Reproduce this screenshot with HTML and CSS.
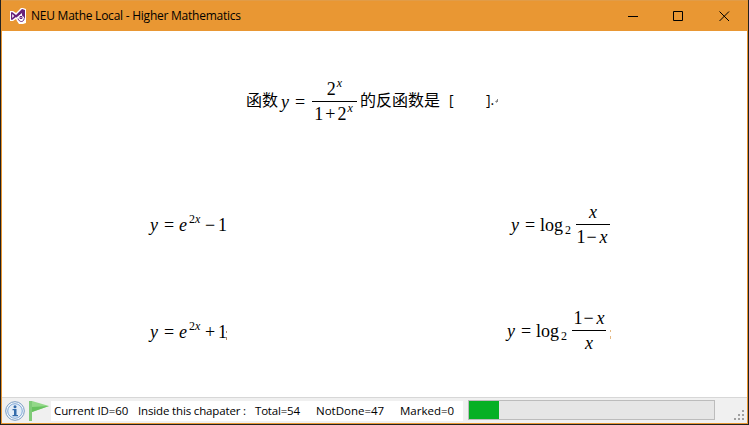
FILE: index.html
```html
<!DOCTYPE html>
<html lang="en">
<head>
<meta charset="utf-8">
<title>NEU Mathe Local - Higher Mathematics</title>
<link rel="stylesheet" href="styles.css">
</head>
<body>
<div class="window">
  <header class="titlebar">
    <svg class="app-icon" width="16" height="16" viewBox="0 0 16 16">
      <path fill="#fff" d="M0 3h3l3 2 5-5h2l3 1v14l-3 1H9l-2-3-1-2-3 2H0z"/>
      <path fill="#68217a" d="M1 4.500 2 4l4 3 6-6 3 1v9l-3 3-6-5-4 3-1-.5zM2.200 6v4l2-2zM12 5 8.500 8l3.500 3z"/>
      <path fill="#fff" d="m7 9 3-2 3 1 2 3-1 4H9l-2-3z"/>
      <path fill="none" stroke="#68217a" d="M8 10.500c1 4 6 4 6 0M10 8.500h2v2h-2z"/>
    </svg>
    <span class="title">NEU Mathe Local - Higher Mathematics</span>
    <div class="controls">
      <svg width="46" height="30" viewBox="0 0 46 30"><path d="M18 15.500h10"/></svg>
      <svg width="46" height="30" viewBox="0 0 46 30"><path d="M17.500 10.500h9v9h-9z"/></svg>
      <svg width="46" height="30" viewBox="0 0 46 30"><path d="m17.500 10.500 9.500 9.500m0-9.500-9.500 9.500"/></svg>
    </div>
  </header>

  <main class="content">
    <section class="question">
      <span class="cjk lead">函数</span>
      <span class="math">
        <i class="y">y</i><span class="eq">=</span>
        <span class="frac wide">
          <span class="num">2<i class="sup">x</i></span>
          <span class="den"><span>1</span><span class="plus">+</span><span>2</span><i class="sup">x</i></span>
        </span>
      </span>
      <span class="cjk tail">的反函数是</span>
      <span class="bracket open">[</span>
      <span class="bracket close">].</span>
      <svg class="mark" width="3" height="5" viewBox="0 0 3 5"><path fill="#888" d="M0 2.500 2 1v3zM2 0h1v3H2z"/></svg>
    </section>
    <section class="answers">
      <div class="answer"><span class="math">
        <i class="y">y</i><span class="eq">=</span><i class="e">e</i><span class="power">2<i>x</i></span><span class="op">−</span><span>1</span>
      </span></div>
      <div class="answer"><span class="math">
        <i class="y">y</i><span class="eq">=</span><span class="log">log</span><span class="sub">2</span>
        <span class="frac">
          <span class="num"><i>x</i></span>
          <span class="den"><span>1</span><span class="minus">−</span><i>x</i></span>
        </span>
      </span></div>
      <div class="answer"><span class="math">
        <i class="y">y</i><span class="eq">=</span><i class="e">e</i><span class="power">2<i>x</i></span><span class="op">+</span><span>1</span>
        <svg class="dots near" width="1" height="9" viewBox="0 0 1 9"><path fill="#b0886a" d="M0 0h1v2H0zM0 6h1v3H0z"/></svg>
      </span></div>
      <div class="answer"><span class="math">
        <i class="y">y</i><span class="eq">=</span><span class="log">log</span><span class="sub">2</span>
        <span class="frac">
          <span class="num"><span>1</span><span class="minus">−</span><i>x</i></span>
          <span class="den single"><i>x</i></span>
        </span>
        <svg class="dots far" width="1" height="9" viewBox="0 0 1 9"><path fill="#e5b983" d="M0 0h1v2H0zM0 6h1v3H0z"/></svg>
      </span></div>
    </section>
  </main>

  <footer class="statusbar">
    <svg class="info" width="20" height="20" viewBox="0 0 20 20">
      <circle cx="10" cy="10" r="9.300" fill="#f5f8fb" stroke="#779bc2" stroke-width="1"/>
      <circle cx="10" cy="10" r="7.300" fill="#e3edf7" stroke="#7fa8d8" stroke-width="1"/>
      <circle cx="10" cy="5.700" r="1.500" fill="#356cab"/>
      <path fill="#356cab" d="M7.500 8h4v6H13v1.300H7.500V14H9V9.300H7.500z"/>
    </svg>
    <svg class="flag" width="22" height="20" viewBox="0 0 22 20">
      <path fill="#7fcb78" d="M1 0h3v20H1z"/>
      <path fill="#92d888" d="m4 0 17 5L4 11z"/>
      <path fill="#67c25f" d="m4 6 17-1L4 11z"/>
    </svg>
    <div class="labels">
      <span class="id">Current ID=60</span>
      <span class="chapter">Inside this chapater :</span>
      <span class="total">Total=54</span>
      <span class="notdone">NotDone=47</span>
      <span class="marked">Marked=0</span>
    </div>
    <div class="progress"><div class="bar"></div></div>
    <svg class="grip" width="12" height="12" viewBox="0 0 12 12">
      <path fill="#a0a0a0" d="M8 1h2v2H8zM4 5h2v2H4zM8 5h2v2H8zM0 9h2v2H0zM4 9h2v2H4zM8 9h2v2H8z"/>
    </svg>
  </footer>
</div>
</body>
</html>
```

FILE: styles.css
```css
* { box-sizing: border-box; }
body { margin: 0; background: #23211f; overflow: hidden; }
i { font-style: italic; }

.window {
  display: flex;
  flex-direction: column;
  width: 747px;
  height: 424px;
  margin-left: 1px;
  border: 1px solid #e89632;
  border-top: 0;
  background: #fff;
  font: 12px/16px "Open Sans", "Noto Sans", sans-serif;
  color: #000;
}

.titlebar {
  display: flex;
  align-items: center;
  flex: none;
  height: 31px;
  padding-left: 8px;
  border-top: 1px solid #e19c48;
  background: #e99733;
}
.app-icon { margin-top: -1px; }
.title { margin-left: 5px; letter-spacing: -0.24px; white-space: nowrap; }
.controls { display: flex; margin-left: auto; margin-right: -1px; }
.controls svg { fill: none; stroke: #000; stroke-width: 1; margin-top: -1px; }

.content { flex: 1; display: flex; flex-direction: column; min-height: 0; }
.question {
  display: flex;
  align-items: center;
  height: 141px;
  padding-left: 244px;
}
.cjk { font: 16px/20px "Noto Sans CJK SC", sans-serif; font-weight: 400; margin-bottom: 6px; white-space: nowrap; }
.lead { width: 35px; }
.tail { margin-left: 3px; width: 89px; }
.bracket { font-size: 14px; line-height: 20px; margin-bottom: 4px; }
.open { width: 37px; }
.close { width: 9px; }

.answers { display: grid; grid-template-columns: 373px 372px; grid-template-rows: 106px 108px; }
.answer { display: flex; align-items: center; padding-left: 148px; }
.answer:nth-child(2) { padding-left: 136px; }
.answer:nth-child(4) { padding: 0 0 2px 132px; }

.math { display: flex; align-items: center; font: 18px/20px "Liberation Serif", serif; }
.y { width: 14px; }
.eq { width: 15px; }
.e { width: 10px; }
.power { width: 16px; font-size: 12px; margin-bottom: 12px; }
.op { width: 13px; }
.log { width: 24px; }
.sub { width: 12px; padding-left: 1px; font-size: 12px; margin-top: 9px; }
.frac { display: flex; flex-direction: column; width: 34px; }
.frac.wide { width: 45px; margin-left: 2px; }
.num, .den { display: flex; justify-content: center; height: 25px; line-height: 25px; }
.den { padding-right: 2px; }
.den.single { padding-right: 0; }
.num { border-bottom: 1px solid #000; }
.sup { font-size: 12px; margin: -6px 0 0 1px; }
.plus { margin: 0 2px; }
.minus { margin: 0 3px 0 1px; }
.dots { margin-top: 6px; }
.near { margin-left: -1px; }
.far { margin-left: 4px; }

.statusbar {
  display: flex;
  align-items: center;
  flex: none;
  height: 26px;
  padding-left: 3px;
  border-top: 1px solid #d7d7d7;
  background: #f0f0f0;
}
.flag { margin-left: 3px; }
.labels { display: flex; align-items: center; width: 412px; height: 20px; margin-left: 1px; padding-left: 3px; background: #fff; font-size: 11.5px; white-space: nowrap; }
.labels span { flex: none; }
.id { width: 84px; letter-spacing: -0.1px; }
.chapter { width: 117px; letter-spacing: -0.15px; }
.total { width: 61px; letter-spacing: -0.2px; }
.notdone { width: 84px; }
.progress { width: 247px; height: 20px; margin: -1px 0 0 5px; border: 1px solid #bcbcbc; background: #e6e6e6; }
.bar { width: 30px; height: 100%; background: #06b025; }
.grip { margin: 9px 0 0 19px; }
```
